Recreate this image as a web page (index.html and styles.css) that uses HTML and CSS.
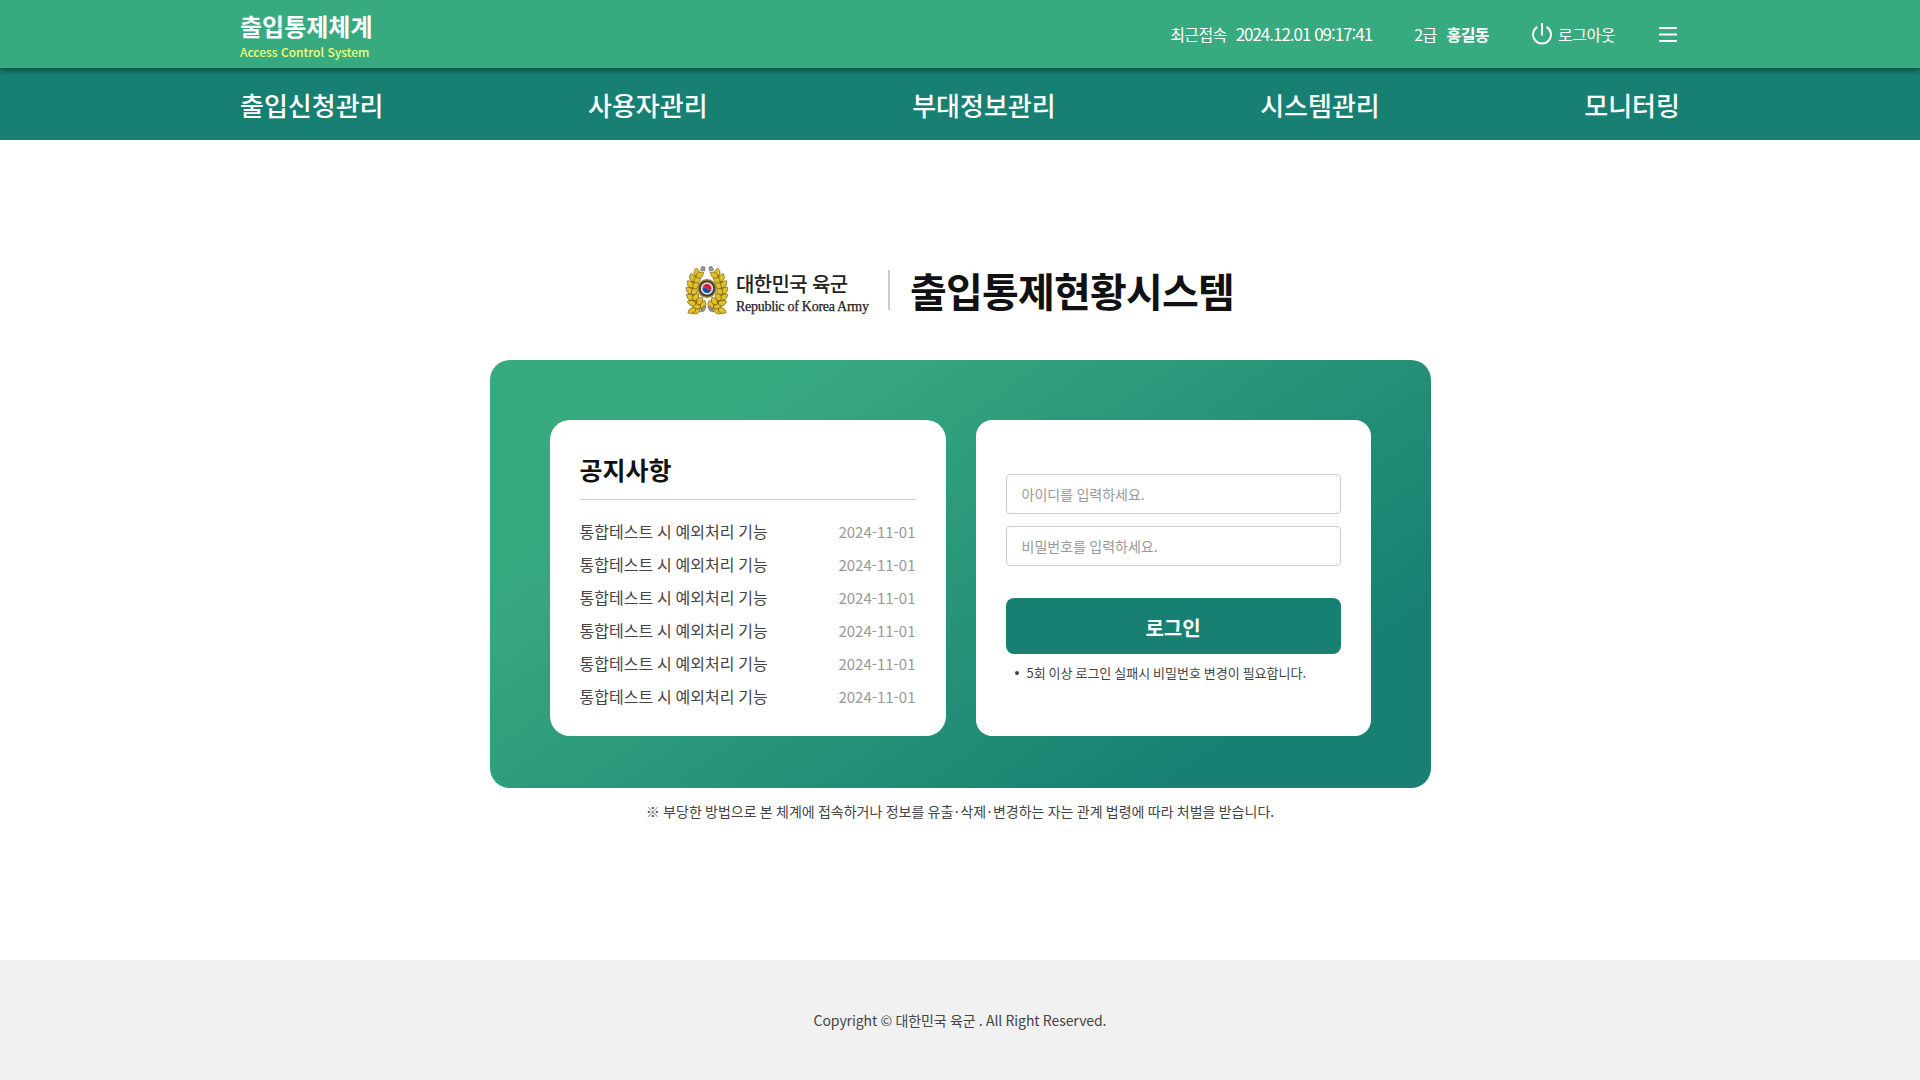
FILE: index.html
```html
<!DOCTYPE html>
<html lang="ko">
<head>
<meta charset="utf-8">
<title>출입통제체계</title>
<link rel="stylesheet" href="styles.css">
</head>
<body>
<header class="top">
  <div class="wrap top-inner">
    <a class="brand"><strong class="brand-name">출입통제체계</strong><span class="brand-sub">Access Control System</span></a>
    <div class="util">
      <p class="recent"><span>최근접속</span><span class="stamp">2024.12.01 09<span class="colon">:</span>17<span class="colon">:</span>41</span></p>
      <p class="user"><span>2급</span><strong>홍길동</strong></p>
      <a class="logout"><svg class="ico-power" viewBox="0 0 20 22"><path d="M5.400 3.800A9 9 0 1 0 14.600 3.800M10 0v12.500"/></svg>로그아웃</a>
      <svg class="ico-menu" viewBox="0 0 18 15"><path d="M0 1h18M0 7.500h18M0 14h18"/></svg>
    </div>
  </div>
</header>
<nav class="gnb"><ul class="wrap gnb-list"><li>출입신청관리</li><li>사용자관리</li><li>부대정보관리</li><li>시스템관리</li><li>모니터링</li></ul></nav>
<main class="main">
  <h1 class="title">
    <span class="army">
      <svg class="emblem" viewBox="0 0 42 48">
        <defs>
          <path id="leaf" d="M0 1C-4-1.400-3.400-5.200 0-8C3.400-5.200 4-1.400 0 1Z"/>
          <g id="branch">
            <path class="base" d="M20 38C14 38 10 33 10 24C10 17 12 11 16 7L11 5L5 15L2 25L3 36L8 42L17 44Z"/>
            <use href="#leaf" transform="translate(13 43) rotate(-125)"/>
            <use href="#leaf" transform="translate(9 43) rotate(-118)"/>
            <use href="#leaf" transform="translate(14 41) rotate(-75)"/>
            <use href="#leaf" transform="translate(9 38) rotate(-72)"/>
            <use href="#leaf" transform="translate(16 42) rotate(20)"/>
            <use href="#leaf" transform="translate(12 38) rotate(30)"/>
            <use href="#leaf" transform="translate(7 33) rotate(-55)"/>
            <use href="#leaf" transform="translate(8 34) rotate(30)"/>
            <use href="#leaf" transform="translate(6 27) rotate(-45)"/>
            <use href="#leaf" transform="translate(7 28) rotate(25)"/>
            <use href="#leaf" transform="translate(6.500 21) rotate(-38)"/>
            <use href="#leaf" transform="translate(8 22) rotate(32)"/>
            <use href="#leaf" transform="translate(8 15) rotate(-25)"/>
            <use href="#leaf" transform="translate(9 16) rotate(45)"/>
            <use href="#leaf" transform="translate(11 10) rotate(-5)"/>
            <use href="#leaf" transform="translate(11 11) rotate(55)"/>
            <path class="silver" d="M14.500 4l1.500-3.500 3 .5-.5 4-2.500-.5zM18 40l-4 6 4-1 2-4z"/>
          </g>
        </defs>
        <g class="wreath"><use href="#branch"/><use href="#branch" transform="translate(42 0) scale(-1 1)"/></g>
        <circle class="seal" cx="21" cy="22.500" r="8.800"/>
        <circle class="seal-in" cx="21" cy="22.500" r="6.200"/>
        <path class="red" d="M16.500 22.500a4.500 4.500 0 0 1 9 0c-1.500 1.900-3 1.700-4.500 0s-3.200-1.800-4.500 0z"/>
        <path class="blue" d="M25.500 22.500a4.500 4.500 0 0 1-9 0c1.300-1.800 3-1.700 4.500 0s3 1.900 4.500 0z"/>
      </svg>
      <span class="army-text"><span class="army-ko">대한민국 육군</span><span class="army-en">Republic of Korea Army</span></span>
    </span>
    <span class="title-text">출입통제현황시스템</span>
  </h1>
  <div class="panel">
    <section class="card notice">
      <h2 class="notice-title">공지사항</h2>
      <ul class="notice-list">
        <li><span>통합테스트 시 예외처리 기능</span><time>2024-11-01</time></li>
        <li><span>통합테스트 시 예외처리 기능</span><time>2024-11-01</time></li>
        <li><span>통합테스트 시 예외처리 기능</span><time>2024-11-01</time></li>
        <li><span>통합테스트 시 예외처리 기능</span><time>2024-11-01</time></li>
        <li><span>통합테스트 시 예외처리 기능</span><time>2024-11-01</time></li>
        <li><span>통합테스트 시 예외처리 기능</span><time>2024-11-01</time></li>
      </ul>
    </section>
    <form class="card login">
      <input class="field" type="text" placeholder="아이디를 입력하세요.">
      <input class="field" type="password" placeholder="비밀번호를 입력하세요.">
      <button class="submit" type="button">로그인</button>
      <p class="hint">5회 이상 로그인 실패시 비밀번호 변경이 필요합니다.</p>
    </form>
  </div>
  <p class="warning">※ 부당한 방법으로 본 체계에 접속하거나 정보를 유출<span class="dot">·</span>삭제<span class="dot">·</span>변경하는 자는 관계 법령에 따라 처벌을 받습니다.</p>
</main>
<footer class="footer">Copyright © 대한민국 육군 . All Right Reserved.</footer>
</body>
</html>
```
FILE: styles.css
```css
* { box-sizing: border-box; margin: 0; padding: 0; }
body { display: flex; flex-direction: column; min-height: 1080px; background: #fff; color: #444; font-family: "Noto Sans CJK KR", sans-serif; font-size: 16px; line-height: 1.5; white-space: nowrap; }
ul { list-style: none; }
.wrap { width: 1440px; margin: 0 auto; }

.top { position: relative; z-index: 1; height: 68px; background: #38aa80; box-shadow: 0 2px 6px rgba(0, 0, 0, .5); color: #fff; }
.top-inner { display: flex; justify-content: space-between; height: 68px; }
.brand { display: flex; flex-direction: column; padding-top: 8px; }
.brand-name { font-size: 24px; line-height: 35px; font-weight: 700; }
.brand-sub { font-size: 12px; line-height: 18px; font-weight: 500; color: #f4ff75; }
.util { display: flex; align-items: center; letter-spacing: -.6px; }
.recent, .user { display: flex; align-items: center; gap: 9px; }
.user { gap: 10px; margin-right: 43px; }
.recent { margin-right: 42px; }
.stamp { font-size: 17px; letter-spacing: -1.02px; }
.colon { display: inline-block; }
.logout { display: flex; align-items: center; gap: 6px; margin-right: 44px; letter-spacing: -.45px; }
.ico-power { width: 20px; height: 22px; }
.ico-menu { width: 18px; height: 15px; margin-right: 3px; }
.ico-power, .ico-menu { fill: none; stroke: #fff; stroke-width: 2; }

.gnb { height: 72px; background: #178072; color: #fff; }
.gnb-list { display: flex; justify-content: space-between; font-size: 26px; line-height: 73px; font-weight: 500; }

.main { display: flex; flex: 1; flex-direction: column; align-items: center; padding-top: 120px; }
.title { display: flex; align-items: center; height: 60px; margin-bottom: 40px; }
.army { display: flex; align-items: center; }
.emblem { width: 42px; height: 48px; margin-right: 8px; overflow: visible; }
.army-text { display: flex; flex-direction: column; width: 134px; padding-top: 6px; color: #222; }
.army-ko { font-size: 20px; line-height: 28px; font-weight: 500; letter-spacing: -.65px; }
.army-en { font-family: "Liberation Serif", serif; font-size: 14px; line-height: 18px; font-weight: 400; letter-spacing: -.28px; -webkit-text-stroke: .25px #222; }
.title-text { display: flex; align-items: center; height: 40px; margin-left: 18px; padding-left: 20px; border-left: 2px solid #ccc; font-size: 40px; line-height: 40px; letter-spacing: -.8px; font-weight: 700; color: #111; }

.wreath { fill: #e0be2c; stroke: #6b5614; stroke-width: .6; }
.base { fill: #a8891d; stroke: none; }
.silver { fill: #999; stroke: #555; }
.seal { fill: #3f3a35; stroke: #9c8129; stroke-width: 1.600; }
.seal-in { fill: #ddd; }
.red { fill: #d3212f; }
.blue { fill: #1c4fa0; }

.panel { display: grid; grid-template: 316px / 396px 395px; gap: 30px; width: 941px; height: 428px; padding: 60px; border-radius: 20px; background: linear-gradient(145deg, #38aa80 20%, #178072 83%); }
.card { padding: 30px 30px 0; border-radius: 20px; background: #fff; }
.notice-title { height: 50px; border-bottom: 1px solid #ccc; font-size: 25px; line-height: 39px; font-weight: 700; color: #111; }
.notice-list { padding-top: 15px; word-spacing: -.04em; }
.notice-list li { display: flex; justify-content: space-between; line-height: 33px; }
.notice-list time { font-size: 15px; color: #999; }

.login { display: flex; flex-direction: column; border-radius: 16px; padding-top: 54px; }
.field { height: 40px; margin-bottom: 12px; padding: 0 15px; border: 1px solid #ccc; border-radius: 4px; font: inherit; font-size: 14px; word-spacing: -.04em; }
.field::placeholder { color: #999; opacity: 1; }
.submit { height: 56px; margin-top: 20px; padding-top: 3px; border: 0; border-radius: 8px; background: #178072; color: #fff; font: inherit; font-size: 20px; font-weight: 700; }
.hint { display: flex; align-items: center; gap: 8px; margin-top: 9px; padding-left: 9px; font-size: 13px; line-height: 20px; word-spacing: -.055em; }
.hint::before { content: ""; width: 4px; height: 4px; border-radius: 50%; background: #444; }
.warning { margin-top: 12px; font-size: 14px; line-height: 22px; word-spacing: -.045em; }
.dot { padding: 0 1.5px; }

.footer { display: flex; align-items: center; justify-content: center; height: 120px; background: #f1f1f1; font-size: 14px; letter-spacing: -.07px; word-spacing: -.04em; }
```
